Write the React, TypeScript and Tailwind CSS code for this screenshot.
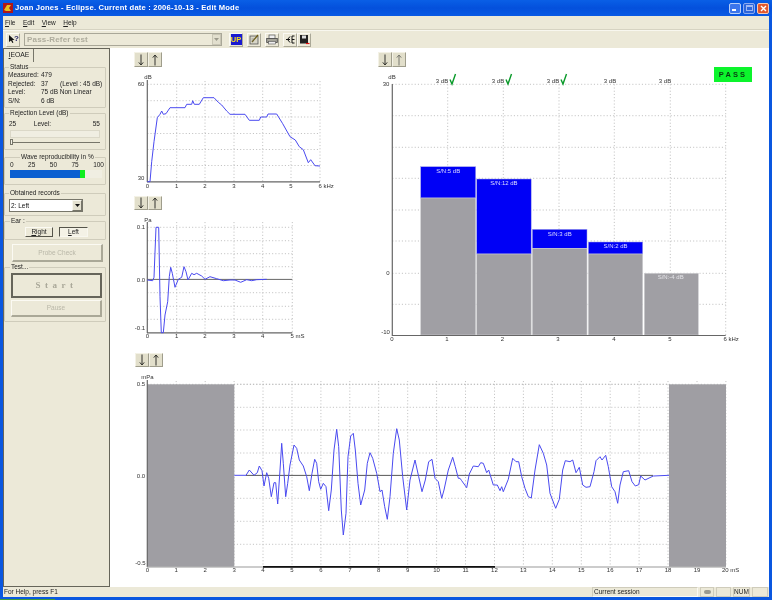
import React from "react";

const z = (pts: number[][], ox: number, oy: number) =>
  pts.map(([x, y]) => `${(x / 3 + ox).toFixed(1)},${(y / 3 + oy).toFixed(1)}`).join(" ");

const curve1 = z([[52,410],[60,410],[65,350],[72,290],[82,218],[90,208],[95,198],[100,208],[108,206],[120,188],[165,188],[170,178],[185,178],[188,167],[193,178],[208,178],[220,158],[252,158],[265,172],[275,180],[290,198],[300,208],[345,208],[358,226],[388,226],[392,216],[410,216],[414,207],[440,207],[458,236],[480,275],[496,285],[508,305],[520,314],[535,353],[542,344],[555,362],[570,363]], 130, 45);
const curve2 = z([[52,270],[68,272],[72,262],[78,112],[86,112],[90,320],[94,428],[100,428],[105,375],[113,335],[118,260],[122,232],[127,250],[135,292],[145,268],[155,262],[162,230],[168,245],[174,270],[185,250],[192,254],[200,250],[215,258],[225,268],[240,260],[260,266],[280,272],[300,270],[315,270],[332,277],[350,269],[365,272],[380,269],[410,268]], 130, 190);
const wave =
  z([[313,376],[348,376],[358,360],[372,376],[382,368],[388,348],[396,362],[402,408],[410,368],[416,385],[424,440],[432,398],[437,398],[443,462],[450,360],[455,280],[460,340],[467,440],[473,400],[480,345],[492,285],[500,295],[508,330],[520,348],[530,380],[538,422],[546,370],[554,328],[560,340],[566,395],[572,418],[580,400],[588,410],[596,482],[604,420],[612,300],[620,238],[626,290],[634,480],[640,555],[648,490],[654,320],[662,258],[670,250],[676,300],[684,400],[692,465],[704,420],[712,340],[720,308],[728,325],[740,370],[750,425],[756,420],[764,470],[772,508],[780,440],[790,310],[800,236],[808,270],[818,380],[830,480],[840,390],[855,330],[866,380],[876,425],[886,390],[896,335],[906,328],[915,385],[925,395],[935,445],[942,420],[955,360],[968,322],[976,350],[985,385],[990,385]], 130, 350) +
  " " +
  z([[65,392],[80,413],[88,372],[100,348],[115,350],[122,338],[130,340],[140,368],[146,360],[160,405],[172,405],[180,422],[185,410],[190,425],[205,388],[218,325],[228,335],[236,335],[245,380],[255,415],[265,440],[274,444],[285,360],[298,284],[310,310],[320,345],[330,430],[347,475],[358,448],[368,360],[376,332],[390,335],[398,330],[408,368],[418,352],[428,405],[438,412],[450,410],[462,365],[468,332],[480,320],[486,330],[497,316],[505,350],[515,410],[525,425],[533,460],[540,405],[550,365],[566,362],[576,395],[586,408],[596,404],[602,378],[615,390],[640,378],[687,376]], 440, 350);

const font = "font-['Liberation_Sans',Arial,sans-serif]";

function T({ x, y, a = "middle", c = "#333", s = 6, children }: { x: number; y: number; a?: "start" | "middle" | "end"; c?: string; s?: number; children: React.ReactNode }) {
  return (
    <text x={x} y={y + 2.1} textAnchor={a} fill={c} fontSize={s} fontFamily="Liberation Sans, Arial, sans-serif">
      {children}
    </text>
  );
}

function Grid({ xs, ys, x0, x1, y0, y1 }: { xs: number[]; ys: number[]; x0: number; x1: number; y0: number; y1: number }) {
  return (
    <g stroke="#b4b4b4" strokeWidth={0.8} strokeDasharray="1.1 2.1" fill="none">
      {xs.map((x) => <line key={"x" + x} x1={x} x2={x} y1={y0} y2={y1} />)}
      {ys.map((y) => <line key={"y" + y} x1={x0} x2={x1} y1={y} y2={y} />)}
    </g>
  );
}

function Chart({ x, y, w, h, children }: { x: number; y: number; w: number; h: number; children: React.ReactNode }) {
  return (
    <svg width={w} height={h} viewBox={`${x} ${y} ${w} ${h}`} className="block shrink-0">
      {children}
    </svg>
  );
}

function ArrowBtn({ up, h, faint }: { up?: boolean; h: number; faint?: boolean }) {
  return (
    <div className="w-[14px] bg-[#e2dfcb] border border-[#f4f2e6] border-r-[#9f9d8c] border-b-[#9f9d8c] flex items-center justify-center" style={{ height: h }}>
      <svg width="8" height="12" viewBox="0 0 8 12" fill="none" stroke={faint ? "#77776f" : "#33332e"} strokeWidth="1">
        {up ? <path d="M4 11.500V1M1.800 3.600 4 1l2.200 2.600" /> : <path d="M4 .5V11M1.800 8.400 4 11l2.200-2.600" />}
      </svg>
    </div>
  );
}

function Arrows({ h, className, faint }: { h: number; className: string; faint?: boolean }) {
  return (
    <div className={"flex shrink-0 " + className}>
      <ArrowBtn h={h} />
      <ArrowBtn h={h} up faint={faint} />
    </div>
  );
}

function Group({ label, h, mt, left = 4, children }: { label: string; h: number; mt: number; left?: number; children?: React.ReactNode }) {
  return (
    <div className="relative w-[102px] shrink-0 border border-[#cfccbb] rounded-[1px]" style={{ height: h, marginTop: mt }}>
      <span className="absolute -top-[5px] bg-[#ece9d8] px-[1px] text-[6.5px] leading-[8px] text-[#222] whitespace-nowrap" style={{ left }}>{label}</span>
      {children}
    </div>
  );
}

function Row({ a, b, c }: { a: string; b: string; c?: string }) {
  return (
    <div className="flex h-[8.6px] items-center text-[6.5px] leading-[8px] text-[#222] whitespace-nowrap">
      <span className="w-[36px] pl-[3px]">{a}</span>
      <span className="w-[19px]">{b}</span>
      {c && <span>{c}</span>}
    </div>
  );
}

function ToolBtn({ children, className = "" }: { children: React.ReactNode; className?: string }) {
  return (
    <div className={"w-[14px] h-[14px] flex items-center justify-center border border-[#fbfaf3] border-r-[#aaa897] border-b-[#aaa897] " + className}>
      {children}
    </div>
  );
}

const xs1 = [176.7, 205, 234, 262.7, 291, 320];
const ys1 = [84.3, 100.7, 117, 133.5, 149.5, 165.5];
const xs2 = [176.7, 205, 234, 262.7, 292.3];
const ys2 = [227.3, 240.7, 253.7, 266.7, 292.7, 306.3, 319.3];
const xs3 = [447.7, 503.3, 559, 614.3, 670.3, 725.7];
const ys3 = [84.3, 115.7, 147.3, 178.3, 210, 241, 273.3, 304.3];
const xs4 = Array.from({ length: 20 }, (_, i) => +(147.3 + (i + 1) * 28.93).toFixed(1));
const ys4 = [384.3, 407.3, 430, 453, 498.3, 521.3, 544.3];

const bars = [
  { x: 420.7, w: 55, t: 166.7, g: 198, l: "S/N:5 dB" },
  { x: 476.7, w: 54.5, t: 179, g: 254, l: "S/N:12 dB" },
  { x: 532.3, w: 54.7, t: 229.3, g: 248.3, l: "S/N:3 dB" },
  { x: 588.3, w: 54.4, t: 242, g: 254, l: "S/N:2 dB" },
];

const Check = ({ x }: { x: number }) => (
  <path d={`M${x} 79.500 L${x + 2} 84 L${x + 5.500} 74`} fill="none" stroke="#0a9a2a" strokeWidth="1.4" />
);

export default function App() {
  return (
    <div className={"w-[772px] h-[600px] overflow-hidden bg-[#0a57e0] px-[3px] flex flex-col blur-[0.3px] " + font}>
      {/* Title bar */}
      <div className="h-[16px] -mx-[3px] px-[3px] shrink-0 flex items-center bg-gradient-to-b from-[#0a5fe6] via-[#0450dc] to-[#0a5ae4]">
        <svg width="10" height="10" viewBox="0 0 10 10" className="shrink-0">
          <rect width="10" height="10" fill="#b01818" />
          <path d="M1 7 4 2h4L6 5l2 3H3z" fill="#e8c020" />
        </svg>
        <span className="ml-[2px] text-[7.6px] font-bold text-white whitespace-nowrap tracking-[0.19px]">Joan Jones - Eclipse. Current date : 2006-10-13 - Edit Mode</span>
        <div className="ml-auto flex gap-[2px]">
          <div className="w-[12px] h-[11px] rounded-[2px] bg-[#3c76ec] border border-[#b8cff8] flex items-end p-[1.5px]"><div className="w-[4px] h-[2px] bg-white" /></div>
          <div className="w-[12px] h-[11px] rounded-[2px] bg-[#2c66dc] border border-[#8aaaf0] p-[1.5px]"><div className="w-full h-full border border-[#9fb8f2] border-t-2" /></div>
          <div className="w-[12px] h-[11px] rounded-[2px] bg-[#e2582e] border border-[#f8c8b0] flex items-center justify-center">
            <svg width="7" height="7" viewBox="0 0 7 7" stroke="#fff" strokeWidth="1.4"><path d="M1 1l5 5M6 1 1 6" /></svg>
          </div>
        </div>
      </div>

      <div className="flex-1 min-h-0 bg-[#ece9d8] flex flex-col">
        {/* Menu */}
        <div className="h-[14px] shrink-0 flex items-center pl-[2px] gap-[7.5px] text-[6.5px] text-[#222] border-b border-[#d6d3c2]">
          {["File", "Edit", "View", "Help"].map((m) => (
            <span key={m} className="leading-[8px]"><span className="underline">{m[0]}</span>{m.slice(1)}</span>
          ))}
        </div>
        {/* Toolbar */}
        <div className="h-[18px] shrink-0 flex items-center pl-[3px] border-t border-[#f8f7ef]">
          <ToolBtn>
            <svg width="11" height="11" viewBox="0 0 11 11">
              <path d="M1 1v7l2-1.600L4.400 9l1-.5L4.200 6H6.500z" fill="#111" />
              <text x="6" y="7" fontSize="8" fontWeight="bold" fill="#1a1a60" fontFamily="Liberation Sans">?</text>
            </svg>
          </ToolBtn>
          <div className="ml-[4px] w-[198px] h-[13px] border border-[#a9a798] flex items-center justify-between pl-[2px]">
            <span className="text-[8px] font-bold text-[#aeac9d] tracking-[0.18px]">Pass-Refer test</span>
            <div className="w-[9px] h-[11px] bg-[#e2dfce] border border-[#c9c6b5] flex items-center justify-center">
              <svg width="5" height="3" viewBox="0 0 5 3"><path d="M0 0h5L2.500 3z" fill="#9c9a8c" /></svg>
            </div>
          </div>
          <div className="ml-[7px] flex gap-[4px]">
            <ToolBtn className="bg-[#e9e6d5]">
              <div className="w-[11px] h-[11px] bg-[#1a1ad0] flex items-center justify-center text-[7.5px] font-bold text-[#f6e020] leading-none">UP</div>
            </ToolBtn>
            <ToolBtn>
              <svg width="11" height="11" viewBox="0 0 11 11">
                <rect x="1" y="2" width="8" height="8" fill="#d8d6c8" stroke="#555" strokeWidth=".8" />
                <path d="M3 8l6-7" stroke="#6a5a10" strokeWidth="1.200" />
                <path d="M2.500 5h3M2.500 7h2" stroke="#777" strokeWidth=".6" />
              </svg>
            </ToolBtn>
            <ToolBtn>
              <svg width="12" height="11" viewBox="0 0 12 11">
                <rect x="3" y="1" width="6" height="4" fill="#eee" stroke="#555" strokeWidth=".7" />
                <rect x=".7" y="4.500" width="10.600" height="4" fill="#a5a499" stroke="#444" strokeWidth=".8" />
                <rect x="2.500" y="7.500" width="7" height="2.500" fill="#eee" stroke="#555" strokeWidth=".6" />
              </svg>
            </ToolBtn>
          </div>
          <div className="ml-[4px] flex">
            <ToolBtn>
              <svg width="11" height="11" viewBox="0 0 11 11" fill="none" stroke="#111" strokeWidth="1">
                <path d="M1 5.500h4M5 2.500 2.500 5.500 5 8.500M7 2h2.500M7 5.500h2.500M7 9h2.500M7 2v7" />
              </svg>
            </ToolBtn>
            <ToolBtn>
              <svg width="11" height="11" viewBox="0 0 11 11">
                <rect x="1" y="1" width="8" height="8.500" fill="#222" />
                <rect x="3" y="1.500" width="4" height="3" fill="#ddd" />
                <path d="M7 9.500h3.500" stroke="#e01010" strokeWidth="1.200" />
              </svg>
            </ToolBtn>
          </div>
        </div>

        {/* Main */}
        <div className="flex-1 min-h-0 flex">
          {/* Sidebar */}
          <div className="w-[107px] shrink-0 border border-[#66655a] flex flex-col">
            <div className="h-[13px] w-[29px] ml-[1px] flex items-center justify-center border-r border-[#77766a] text-[6.8px] text-[#222] shrink-0">
              <span><span className="underline">I</span>EOAE</span>
            </div>
            <Group label="Status" h={41} mt={5}>
              <div className="pt-[3px]">
                <Row a="Measured:" b="479" />
                <Row a="Rejected:" b="37" c="(Level : 45 dB)" />
                <Row a="Level:" b="75 dB Non Linear" />
                <Row a="S/N:" b="6 dB" />
              </div>
            </Group>
            <Group label="Rejection Level (dB)" h={37} mt={5}>
              <div className="flex justify-between px-[4px] pt-[6px] text-[6.5px] leading-[8px] text-[#222]">
                <span>25</span><span className="mr-[24px]">Level:</span><span className="mr-[1px]">55</span>
              </div>
              <div className="mx-[5px] mt-[2px] h-[8px] bg-[#f0eee2] border border-[#dbd8c8]" />
              <div className="relative mx-[5px] mt-[4px] h-[1px] bg-[#77766a]">
                <div className="absolute -top-[3px] left-0 w-[3px] h-[6px] bg-[#f4f2e6] border border-[#77766a]" />
              </div>
            </Group>
            <Group label="Wave reproducibility in %" h={28} mt={7} left={15}>
              <div className="flex justify-between pl-[5px] pr-[1px] pt-[3px] text-[6.5px] leading-[8px] text-[#222]">
                <span>0</span><span>25</span><span>50</span><span>75</span><span>100</span>
              </div>
              <div className="mx-[5px] mt-[1px] h-[8px] w-[92px] bg-[#f0eee2] flex">
                <div className="w-[70px] bg-[#0a5fd0]" />
                <div className="w-[5px] bg-[#10ee20]" />
              </div>
            </Group>
            <Group label="Obtained records" h={23} mt={8}>
              <div className="ml-[4px] mt-[5px] w-[74px] h-[13px] bg-white border border-[#77766a] flex items-center justify-between pl-[1px] text-[6.5px] text-[#111]">
                <span>2: Left</span>
                <div className="w-[10px] h-[11px] bg-[#e4e1d0] border border-[#f8f7ef] border-r-[#77766a] border-b-[#77766a] flex items-center justify-center">
                  <svg width="5" height="3" viewBox="0 0 5 3"><path d="M0 0h5L2.500 3z" fill="#111" /></svg>
                </div>
              </div>
            </Group>
            <Group label="Ear :" h={19} mt={5} left={5}>
              <div className="flex ml-[20px] mt-[5px] gap-[6px] text-[6.5px] text-[#222]">
                <div className="w-[28px] h-[10px] flex items-center justify-center border border-[#fbfaf3] border-r-[#55544a] border-b-[#55544a]"><span><span className="underline">R</span>ight</span></div>
                <div className="w-[29px] h-[10px] flex items-center justify-center bg-[#f4f2e6] border border-[#f8f7ef] border-l-[#55544a] border-t-[#55544a]"><span><span className="underline">L</span>eft</span></div>
              </div>
            </Group>
            <div className="ml-[8px] mt-[4px] w-[91px] h-[18px] shrink-0 flex items-center justify-center text-[6.5px] text-[#b9b7a8] border border-[#fbfaf3] border-r-2 border-b-2 border-r-[#aaa897] border-b-[#aaa897]">Probe Check</div>
            <Group label="Test..." h={55} mt={5} left={5}>
              <div className="ml-[6px] mt-[5px] w-[91px] h-[25px] flex items-center justify-center border-2 border-[#66655a] text-[#a9a798] text-[9px] font-bold tracking-[4.5px] font-['Liberation_Serif',serif]">Start</div>
              <div className="ml-[6px] mt-[2px] w-[91px] h-[17px] flex items-center justify-center text-[6.5px] text-[#b9b7a8] border border-[#fbfaf3] border-r-2 border-b-2 border-r-[#aaa897] border-b-[#aaa897]">Pause</div>
            </Group>
          </div>

          {/* Content */}
          <div className="flex-1 min-w-0 bg-white flex flex-col">
            <div className="flex shrink-0">
              <div className="ml-[20px] w-[240px] shrink-0 flex flex-col">
                <Arrows h={15} className="ml-[4px] mt-[4px]" />
                <Chart x={130} y={67} w={220} h={129}>
                  <Grid xs={xs1} ys={ys1} x0={147.3} x1={320} y0={81} y1={181.7} />
                  <line x1="147.3" x2="147.3" y1="80" y2="182" stroke="#666" strokeWidth="1.2" />
                  <line x1="147" x2="320" y1="181.8" y2="181.8" stroke="#666" strokeWidth="1.2" />
                  <polyline points={curve1} fill="none" stroke="#4a4af0" strokeWidth="1" strokeLinejoin="round" />
                  <T x={148} y={76.7}>dB</T>
                  <T x={141} y={84}>60</T>
                  <T x={141} y={177.7}>30</T>
                  {["0", "1", "2", "3", "4", "5"].map((t, i) => <T key={t} x={[147.3, ...xs1][i]} y={185.7}>{t}</T>)}
                  <T x={318.5} y={185.7} a="start">6 kHz</T>
                </Chart>
                <Arrows h={14} className="ml-[4px]" />
                <Chart x={130} y={210} w={220} h={135}>
                  <Grid xs={xs2} ys={ys2} x0={147.3} x1={292.3} y0={222} y1={332.7} />
                  <line x1="147.3" x2="147.3" y1="222" y2="333" stroke="#666" strokeWidth="1.2" />
                  <line x1="147" x2="292.3" y1="332.8" y2="332.8" stroke="#666" strokeWidth="1.2" />
                  <line x1="147" x2="292.3" y1="279.4" y2="279.4" stroke="#666" strokeWidth="1" />
                  <polyline points={curve2} fill="none" stroke="#4a4af0" strokeWidth="1" strokeLinejoin="round" />
                  <T x={148} y={219.5}>Pa</T>
                  <T x={141} y={227.3}>0.1</T>
                  <T x={141} y={279.4}>0.0</T>
                  <T x={140} y={328}>-0.1</T>
                  {["0", "1", "2", "3", "4"].map((t, i) => <T key={t} x={[147.3, ...xs2][i]} y={336}>{t}</T>)}
                  <T x={290.5} y={336} a="start">5 mS</T>
                </Chart>
              </div>
              <div className="flex flex-col">
                <Arrows h={15} className="ml-[8px] mt-[4px]" faint />
                <div className="relative">
                  <Chart x={370} y={67} w={399} h={278}>
                    <Grid xs={xs3} ys={ys3} x0={392.3} x1={725.7} y0={84.3} y1={335} />
                    {bars.map((b) => (
                      <g key={b.l}>
                        <rect x={b.x} y={b.t} width={b.w} height={b.g - b.t} fill="#0000f6" stroke="#a9a9e8" strokeWidth=".5" />
                        <rect x={b.x} y={b.g} width={b.w} height={335 - b.g} fill="#a09fa4" stroke="#cfcfd2" strokeWidth=".6" />
                        <T x={b.x + b.w / 2} y={b.t + 4.2} c="#dcdcff">{b.l}</T>
                      </g>
                    ))}
                    <rect x={644.3} y={273.3} width={54} height={61.7} fill="#a09fa4" stroke="#cfcfd2" strokeWidth=".6" />
                    <T x={670.7} y={277} c="#e4e4e8">S/N:-4 dB</T>
                    <line x1="392.3" x2="392.3" y1="84" y2="336" stroke="#666" strokeWidth="1.2" />
                    <line x1="392" x2="725.7" y1="335.5" y2="335.5" stroke="#666" strokeWidth="1.2" />
                    {[442, 498, 553, 610, 665].map((x) => <T key={x} x={x} y={81}>3 dB</T>)}
                    <Check x={450} /><Check x={506} /><Check x={561} />
                    <T x={392} y={77}>dB</T>
                    <T x={386} y={84.3}>30</T>
                    <T x={388} y={273.3}>0</T>
                    <T x={385.5} y={331.7}>-10</T>
                    {["0", "1", "2", "3", "4", "5"].map((t, i) => <T key={t} x={[392, 447, 502.5, 558, 614, 670][i]} y={339.3}>{t}</T>)}
                    <T x={723.5} y={339.3} a="start">6 kHz</T>
                  </Chart>
                  <div className="absolute left-[344px] top-0 w-[38px] h-[15px] bg-[#0cf42c] flex items-center justify-center text-[7.5px] font-bold tracking-[2.1px] text-[#0a3a12]">PASS</div>
                </div>
              </div>
            </div>
            <Arrows h={14} className="ml-[24.5px] mt-[8px]" />
            <Chart x={110} y={367} w={659} h={218}>
              <Grid xs={xs4} ys={ys4} x0={147.3} x1={726} y0={381} y1={566} />
              <line x1="234" x2="669" y1="384.3" y2="384.3" stroke="#b4b4b4" strokeWidth=".8" strokeDasharray="1.1 2.1" />
              <rect x={147.3} y={384.3} width={87} height={182.4} fill="#9f9ea3" />
              <rect x={669} y={384.3} width={57} height={182.4} fill="#9f9ea3" />
              <line x1="147.3" x2="147.3" y1="380" y2="567" stroke="#666" strokeWidth="1.2" />
              <line x1="147" x2="726" y1="567" y2="567" stroke="#9a9a9a" strokeWidth="1.2" />
              <line x1="263" x2="495" y1="566.9" y2="566.9" stroke="#111" strokeWidth="1.6" />
              <line x1="246" x2="653" y1="475.4" y2="475.4" stroke="#444" strokeWidth=".9" />
              <polyline points={wave} fill="none" stroke="#4a4af0" strokeWidth="1" strokeLinejoin="round" />
              <T x={147.5} y={376.7}>mPa</T>
              <T x={141} y={384.3}>0.5</T>
              <T x={141} y={475.5}>0.0</T>
              <T x={140.5} y={562.7}>-0.5</T>
              {Array.from({ length: 20 }, (_, i) => <T key={i} x={147.3 + i * 28.93} y={570.3}>{String(i)}</T>)}
              <T x={722} y={570.3} a="start">20 mS</T>
            </Chart>
          </div>
        </div>

        {/* Status bar */}
        <div className="h-[10px] shrink-0 flex items-center text-[6.5px] text-[#222]">
          <span className="pl-[1px]">For Help, press F1</span>
          <div className="ml-auto flex h-full gap-[2px] pr-[1px]">
            <div className="w-[106px] border border-[#cfccbb] border-r-[#fbfaf3] border-b-[#fbfaf3] pl-[1px] flex items-center">Current session</div>
            <div className="w-[14px] border border-[#cfccbb] flex items-center justify-center">
              <div className="w-[7px] h-[4px] rounded-full bg-[#9a9a90]" />
            </div>
            <div className="w-[15px] border border-[#cfccbb]" />
            <div className="w-[17px] border border-[#cfccbb] flex items-center justify-center">NUM</div>
            <div className="w-[16px] border border-[#cfccbb]" />
          </div>
        </div>
      </div>
      <div className="h-[3px] shrink-0 -ml-[3px] flex items-end">
        <div className="w-[55px] h-[1px] bg-[#3c9a3c]" />
      </div>
    </div>
  );
}
